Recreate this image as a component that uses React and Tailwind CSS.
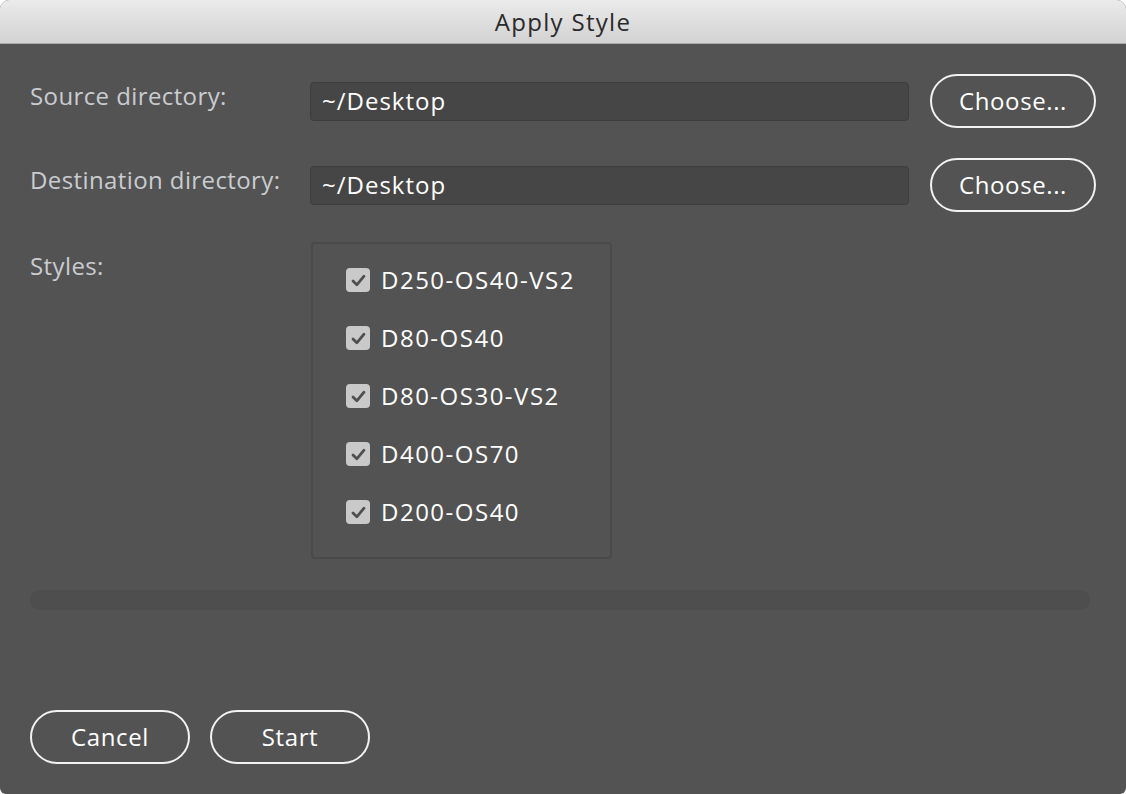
import React, { useState } from 'react';

const styleNames = ['D250-OS40-VS2', 'D80-OS40', 'D80-OS30-VS2', 'D400-OS70', 'D200-OS40'];

const PillButton = ({ children, className = '' }) => (
  <button
    type="button"
    className={`h-[54px] rounded-full border-2 border-[#f2f2f2] text-[24px] font-medium tracking-[0.6px] text-white ${className}`}
  >
    {children}
  </button>
);

const DirRow = ({ label, value }) => (
  <div className="flex items-center">
    <div className="w-[280px] -mt-[10px] text-[24px] tracking-[0.4px] text-[#c9ccd0]">{label}</div>
    <div className="flex-1 h-[39px] rounded-[4px] border border-[#3d3d3d] bg-[#464646] px-[11px] flex items-center text-[24px] tracking-[1px] text-white">
      {value}
    </div>
    <PillButton className="ml-[21px] w-[166px]">Choose...</PillButton>
  </div>
);

const App = () => {
  const [checked, setChecked] = useState(styleNames.map(() => true));

  return (
    <div className="w-[1126px] h-[794px] bg-white" style={{ fontFamily: '"Open Sans", "Noto Sans", sans-serif' }}>
      <div className="h-full flex flex-col rounded-t-[9px] rounded-b-[6px] overflow-hidden bg-[#535353]">
        <div className="h-[44px] shrink-0 flex items-center justify-center bg-gradient-to-b from-[#ebebeb] to-[#d2d2d2] border-b border-[#acacac] text-[24px] tracking-[1.3px] text-[#2a2a2a]">
          Apply Style
        </div>

        <div className="flex-1 flex flex-col px-[30px] pt-[30px]">
          <DirRow label="Source directory:" value="~/Desktop" />
          <div className="h-[30px]" />
          <DirRow label="Destination directory:" value="~/Desktop" />

          <div className="flex mt-[30px]">
            <div className="w-[281px] pt-[6px] text-[24px] tracking-[0.4px] text-[#c9ccd0]">Styles:</div>
            <div className="w-[301px] h-[317px] rounded-[4px] border-2 border-[#4a4a4a] pl-[33px] pt-[24px] flex flex-col gap-[34px]">
              {styleNames.map((name, i) => (
                <label key={name} className="flex items-center h-[24px] cursor-pointer">
                  <span
                    onClick={() => setChecked(checked.map((c, j) => (j === i ? !c : c)))}
                    className="w-[24px] h-[24px] rounded-[4px] bg-[#c9c9c9] flex items-center justify-center"
                  >
                    {checked[i] && (
                      <svg width="15" height="13" viewBox="0 0 15 13">
                        <path d="M2 7 L5.8 10.8 L13 2.2" fill="none" stroke="#4f4f4f" strokeWidth="2.8" strokeLinecap="round" strokeLinejoin="round" />
                      </svg>
                    )}
                  </span>
                  <span className="ml-[11px] text-[24px] font-medium tracking-[1.5px] text-white">{name}</span>
                </label>
              ))}
            </div>
          </div>

          <div className="mt-[31px] mr-[6px] h-[20px] rounded-full bg-[#4e4e4e]" />

          <div className="flex gap-[20px] mt-[100px]">
            <PillButton className="w-[160px]">Cancel</PillButton>
            <PillButton className="w-[160px]">Start</PillButton>
          </div>
        </div>
      </div>
    </div>
  );
};

export default App;
